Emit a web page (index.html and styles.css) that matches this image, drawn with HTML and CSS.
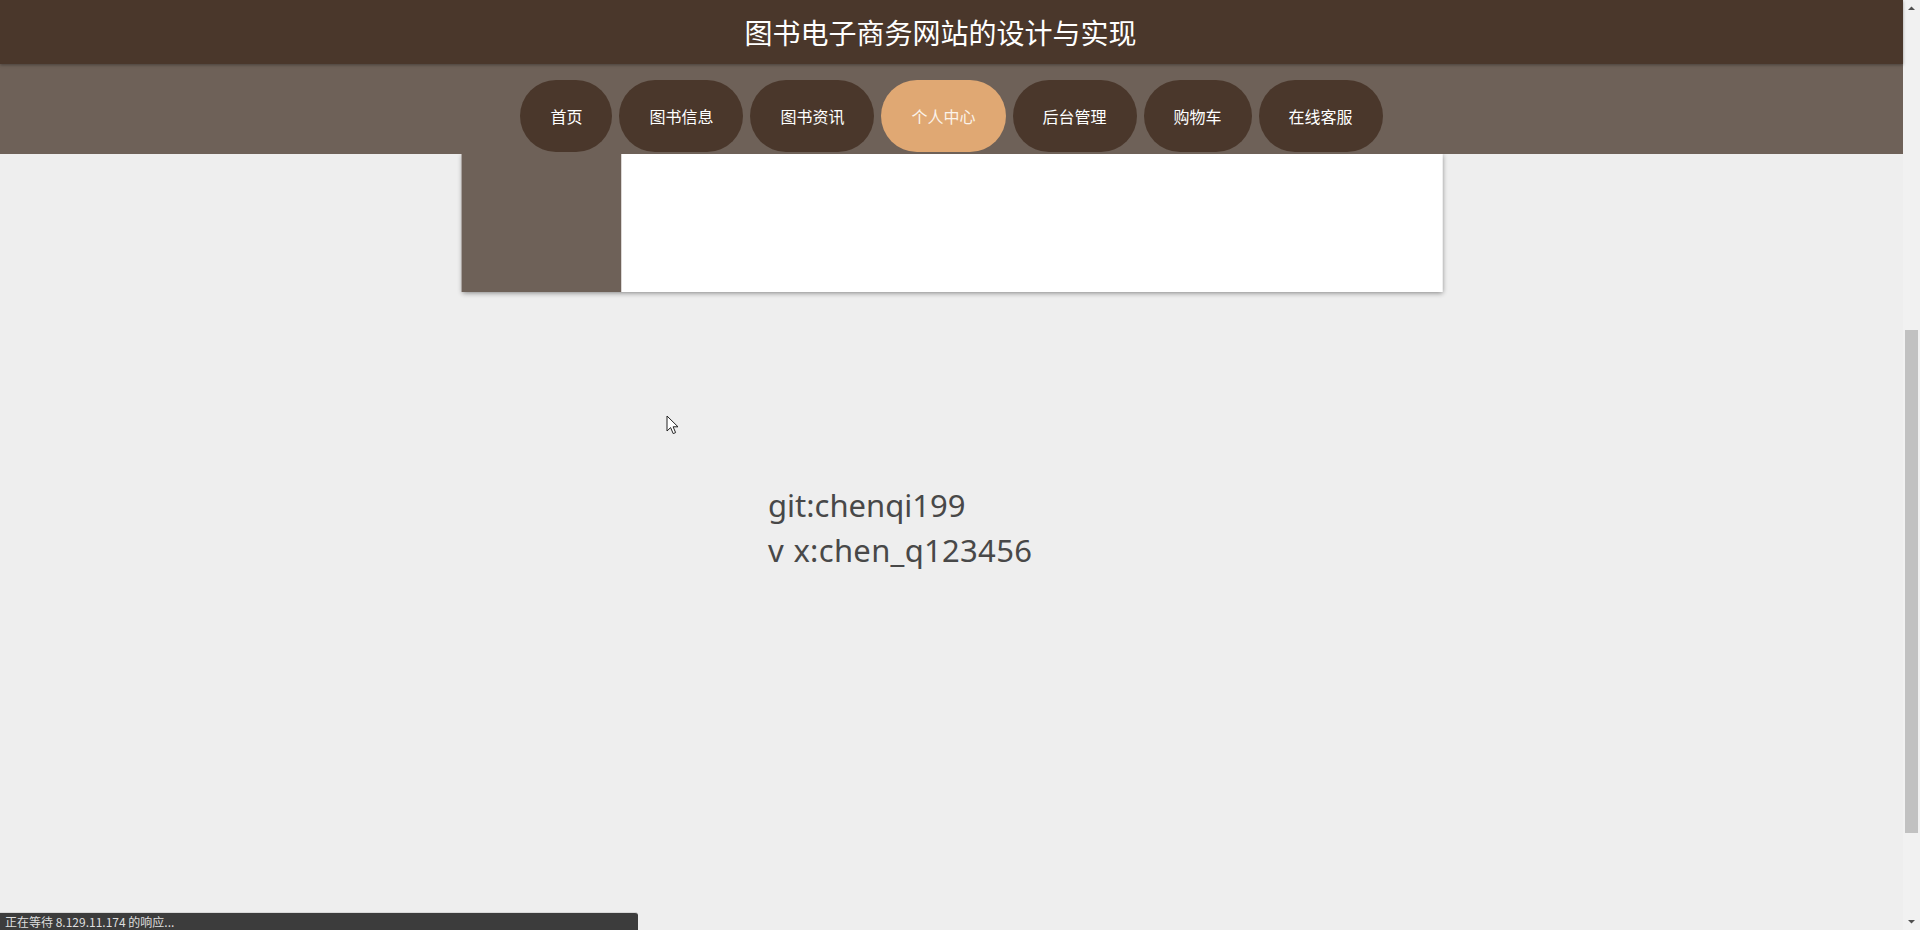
FILE: index.html
```html
<!DOCTYPE html>
<html lang="zh-CN">
<head>
<meta charset="utf-8">
<title>图书电子商务网站的设计与实现</title>
<link rel="stylesheet" href="styles.css">
</head>
<body>
<div class="app">
  <div class="page">
    <header class="site-header">
      <h1 class="site-title">图书电子商务网站的设计与实现</h1>
    </header>
    <nav class="site-nav">
      <a class="nav-item">首页</a>
      <a class="nav-item">图书信息</a>
      <a class="nav-item">图书资讯</a>
      <a class="nav-item active">个人中心</a>
      <a class="nav-item">后台管理</a>
      <a class="nav-item">购物车</a>
      <a class="nav-item">在线客服</a>
    </nav>
    <section class="card">
      <aside class="card-side"></aside>
      <div class="card-body"></div>
    </section>
    <div class="contact">
      <p class="contact-line">git:chenqi199</p>
      <p class="contact-line contact-line-wide">v x:chen_q123456</p>
    </div>
    <svg class="cursor" width="14" height="20" viewBox="0 0 14 20">
      <path d="M1 1 L1 16 L4.6 12.6 L7.2 18.6 L9.6 17.6 L7.1 11.8 L12 11.8 Z" fill="#fff" stroke="#222" stroke-width="1" stroke-linejoin="round"/>
    </svg>
    <div class="status-bar">正在等待 8.129.11.174 的响应...</div>
  </div>
  <div class="scrollbar">
    <div class="sb-arrow"><svg width="17" height="17" viewBox="0 0 17 17"><path d="M5 10 L8.5 6.5 L12 10 Z" fill="#505050"/></svg></div>
    <div class="sb-track"><div class="sb-thumb"></div></div>
    <div class="sb-arrow"><svg width="17" height="17" viewBox="0 0 17 17"><path d="M5 7 L8.5 10.5 L12 7 Z" fill="#505050"/></svg></div>
  </div>
</div>
</body>
</html>
```
FILE: styles.css
```css
* { box-sizing: border-box; }
html, body { margin: 0; padding: 0; }
body {
  background: #eeeeee;
  font-family: "Noto Sans", "Noto Sans CJK SC", sans-serif;
  overflow: hidden;
}
.app {
  display: flex;
  width: 1920px;
  height: 930px;
  overflow: hidden;
}
.page {
  position: relative;
  flex: 1;
  display: flex;
  flex-direction: column;
  min-width: 0;
}
.site-header {
  height: 64px;
  background: #4a372b;
  display: flex;
  align-items: center;
  justify-content: center;
  padding-right: 22px;
  box-shadow: 0 1px 3px rgba(0,0,0,0.35);
  position: relative;
  z-index: 2;
}
.site-title {
  margin: 0;
  color: #ffffff;
  font-family: "Noto Sans CJK SC", sans-serif;
  font-size: 28px;
  font-weight: 400;
  line-height: 1;
}
.site-nav {
  height: 90px;
  background: #6e6158;
  display: flex;
  justify-content: center;
  align-items: flex-start;
  gap: 7px;
  padding-top: 16px;
  position: relative;
  z-index: 1;
}
.nav-item {
  height: 72px;
  padding: 0 30px;
  border-radius: 40px;
  background: #4a372b;
  color: #ffffff;
  font-family: "Noto Sans CJK SC", sans-serif;
  font-size: 16px;
  display: flex;
  align-items: center;
  white-space: nowrap;
}
.nav-item.active {
  background: #e0a873;
  color: #fbf3ea;
}
.card {
  width: 981px;
  height: 138px;
  margin: 0 auto;
  display: flex;
  background: #ffffff;
  box-shadow: 0 1px 5px rgba(0,0,0,0.45);
  transform: translateX(0.5px);
}
.card-side {
  width: 160px;
  background: #6e6158;
}
.card-body {
  flex: 1;
  background: #ffffff;
}
.contact {
  margin-top: 191px;
  padding-left: 768px;
}
.contact-line {
  margin: 0;
  font-family: "Noto Sans", sans-serif;
  font-size: 31px;
  line-height: 45px;
  color: #484848;
}
.contact-line-wide {
  letter-spacing: 0.3px;
  word-spacing: 1px;
}
.cursor {
  position: absolute;
  left: 666px;
  top: 415px;
}
.status-bar {
  position: absolute;
  left: 0;
  bottom: 0;
  width: 638px;
  height: 18px;
  background: #3c3c3c;
  border-top: 1px solid #d8d8d8;
  border-top-right-radius: 3px;
  color: #dedede;
  font-family: "Noto Sans CJK SC", sans-serif;
  font-size: 12px;
  line-height: 17px;
  padding-left: 5px;
  white-space: nowrap;
}
.scrollbar {
  width: 17px;
  background: #f1f1f1;
  display: flex;
  flex-direction: column;
}
.sb-arrow {
  height: 17px;
  display: flex;
}
.sb-track {
  flex: 1;
  padding: 313px 2px 0 2px;
}
.sb-thumb {
  height: 503px;
  background: #c1c1c1;
}
```
